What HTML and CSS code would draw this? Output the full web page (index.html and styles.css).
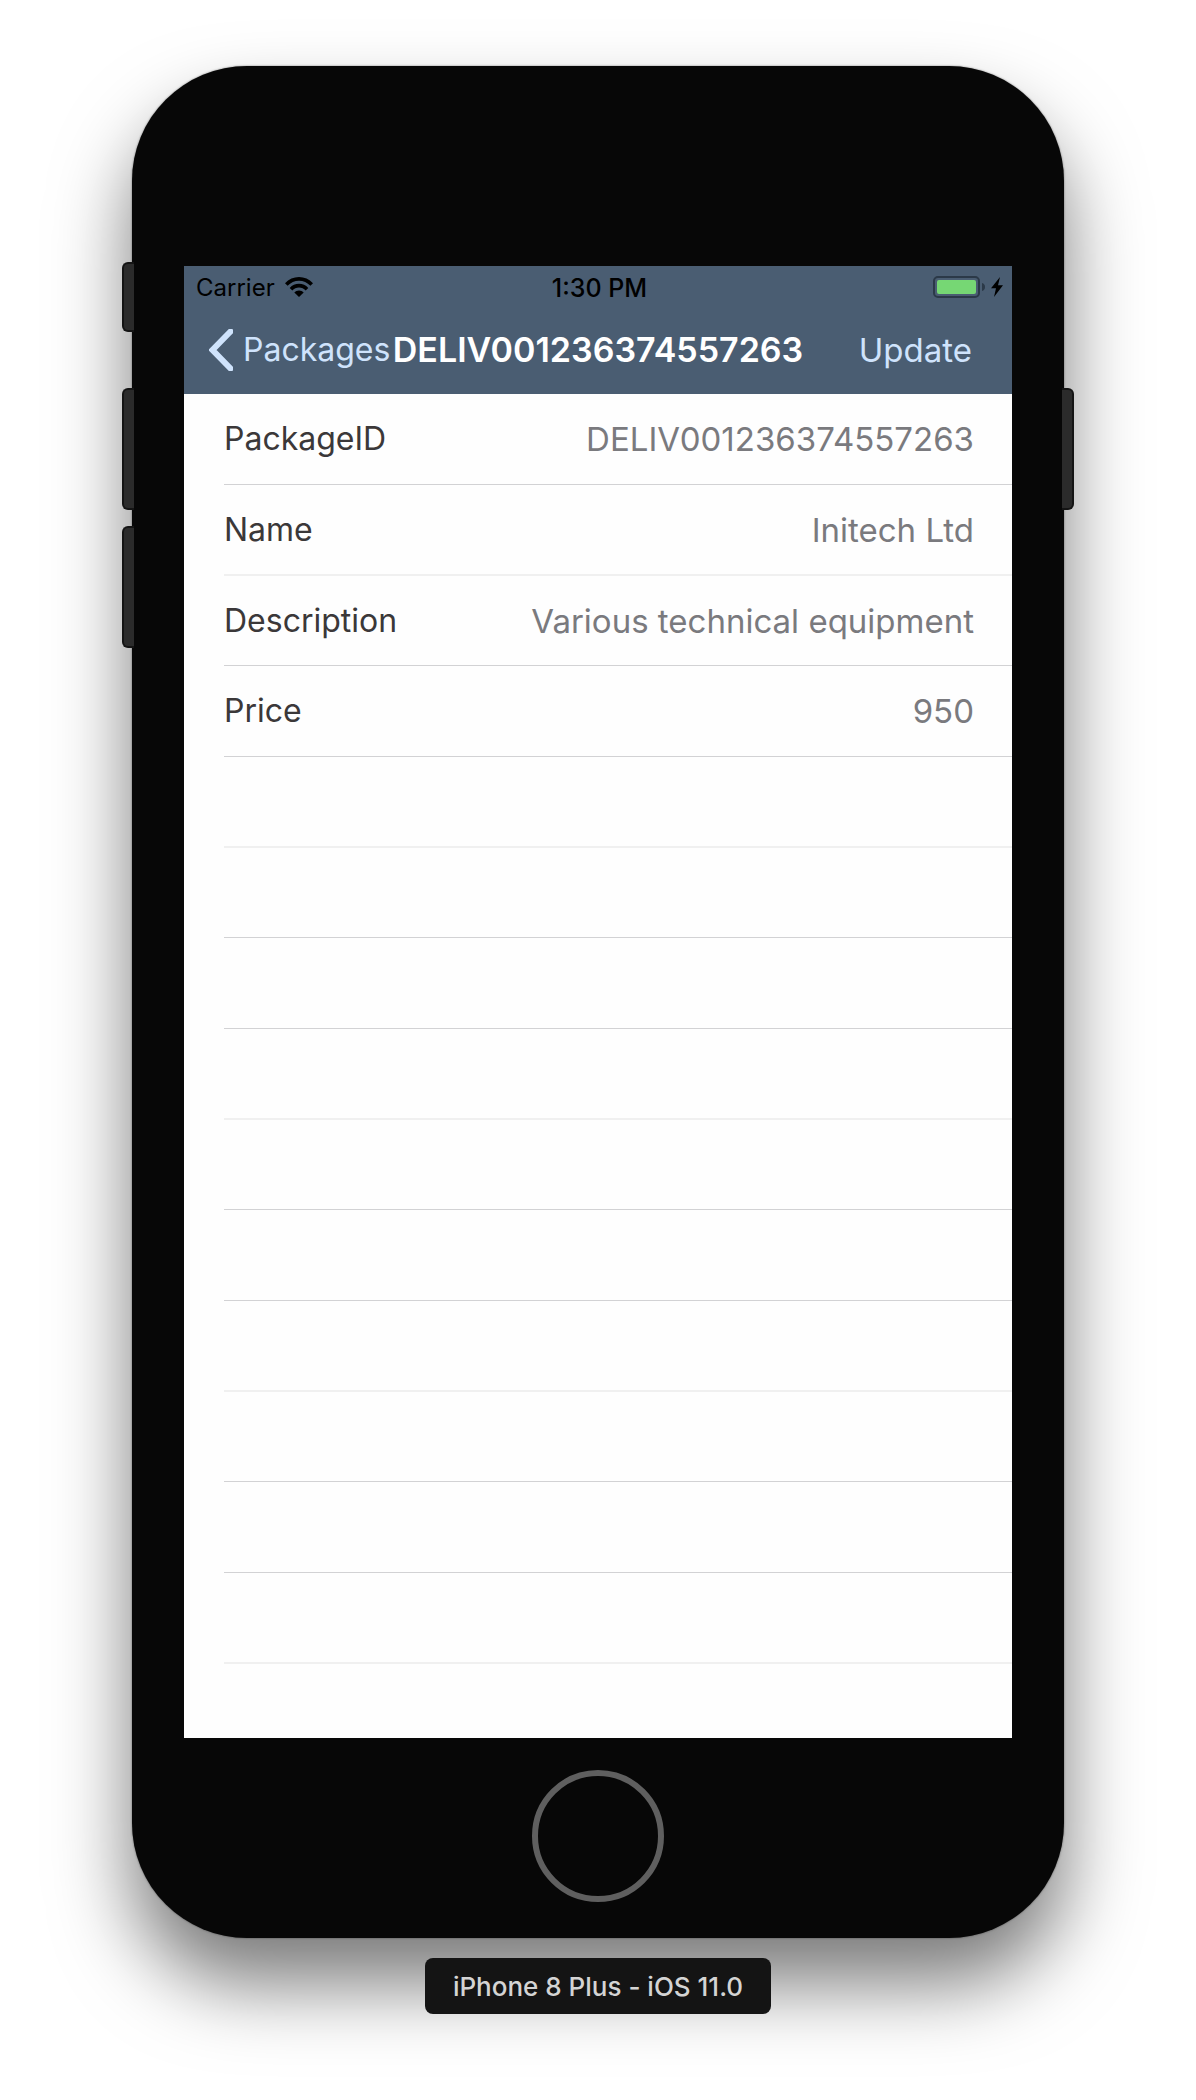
FILE: index.html
```html
<!DOCTYPE html>
<html lang="en">
<head>
<meta charset="utf-8">
<meta name="viewport" content="width=device-width, initial-scale=1">
<title>Package details</title>
<link rel="stylesheet" href="styles.css">
</head>
<body>
<div class="stage">
  <div class="phone">
    <span class="side-key mute"></span>
    <span class="side-key volume-up"></span>
    <span class="side-key volume-down"></span>
    <span class="side-key power"></span>

    <div class="screen">
      <header class="top">
        <div class="status">
          <div class="status-left">
            <span class="carrier">Carrier</span>
            <svg class="wifi" viewBox="0 0 28 20" aria-hidden="true">
              <path d="M0 6.2C3.8 2.200 8.700 0 14 0s10.200 2.200 14 6.200l-2.600 2.600C22.300 5.500 18.300 3.700 14 3.700S5.700 5.500 2.600 8.800z"/>
              <path d="M4.700 10.900C7.200 8.200 10.400 6.800 14 6.800s6.800 1.400 9.300 4.100l-2.600 2.600c-1.800-2-4.100-3.100-6.700-3.100s-4.900 1.100-6.700 3.100z"/>
              <path d="M9.300 15.500c1.200-1.300 2.800-2.100 4.700-2.100s3.500.8 4.700 2.100L14 20z"/>
            </svg>
          </div>
          <span class="time">1:30 PM</span>
          <div class="status-right">
            <svg class="battery" viewBox="0 0 52 22" aria-hidden="true">
              <rect x="1" y="1" width="45" height="20" rx="4" fill="none" stroke="#2b3948" stroke-width="2"/>
              <rect x="4" y="4" width="39" height="14" rx="2" fill="#76d774"/>
              <path d="M49 7c2 .6 3 2 3 4s-1 3.400-3 4z" fill="#2b3948"/>
            </svg>
            <svg class="bolt" viewBox="0 0 12 20" aria-hidden="true">
              <path d="M9 0 0 11.200h5L3 20l9-11.700H7z"/>
            </svg>
          </div>
        </div>
        <nav class="bar">
          <a class="back" href="#packages">
            <svg class="chevron" viewBox="0 0 24 42" aria-hidden="true"><path d="M21.500 2.500 3.500 21l18 18.500"/></svg>
            <span>Packages</span>
          </a>
          <h1 class="title">DELIV001236374557263</h1>
          <button class="update" type="button">Update</button>
        </nav>
      </header>

      <main class="content">
        <dl class="fields">
          <div class="row"><dt>PackageID</dt><dd>DELIV001236374557263</dd></div>
          <div class="row"><dt>Name</dt><dd>Initech Ltd</dd></div>
          <div class="row"><dt>Description</dt><dd>Various technical equipment</dd></div>
          <div class="row"><dt>Price</dt><dd>950</dd></div>
        </dl>
        <div class="blank" aria-hidden="true">
          <div class="row"></div>
          <div class="row"></div>
          <div class="row"></div>
          <div class="row"></div>
          <div class="row"></div>
          <div class="row"></div>
          <div class="row"></div>
          <div class="row"></div>
          <div class="row"></div>
          <div class="row"></div>
        </div>
      </main>
    </div>

    <button class="home" type="button" aria-label="Home"></button>
  </div>
  <p class="device">iPhone 8 Plus - iOS 11.0</p>
</div>
</body>
</html>
```
FILE: styles.css
```css
* {
  box-sizing: border-box;
}

body {
  margin: 0;
  background: #fff;
  font-family: Inter, "Liberation Sans", sans-serif;
  font-size: 33px;
  line-height: 40px;
}

button {
  padding: 0;
  border: 0;
  background: none;
  color: inherit;
  font: inherit;
}

.stage {
  display: flex;
  flex-direction: column;
  align-items: center;
  gap: 20px;
  padding: 66px 132px 86px;
  overflow: hidden;
}

/* Device body */
.phone {
  position: relative;
  display: flex;
  flex-direction: column;
  align-items: center;
  align-self: stretch;
  gap: 32px;
  padding: 200px 52px 36px;
  border-radius: 115px;
  background: #070707;
  box-shadow: 0 0 2px rgba(0, 0, 0, 0.5), 0 46px 78px rgba(0, 0, 0, 0.52);
}

.side-key {
  position: absolute;
  left: -10px;
  width: 12px;
  height: 122px;
  border: 2px solid #141414;
  border-right: 0;
  border-radius: 6px 0 0 6px;
  background: #2b2b2b;
}

.mute {
  top: 196px;
  height: 70px;
}

.volume-up,
.power {
  top: 322px;
}

.volume-down {
  top: 460px;
}

.power {
  right: -10px;
  left: auto;
  border-right: 2px solid #141414;
  border-left: 0;
  border-radius: 0 6px 6px 0;
}

.home {
  width: 132px;
  height: 132px;
  border: 6px solid #5f5f5f;
  border-radius: 50%;
}

/* Screen */
.screen {
  align-self: stretch;
  background: #fefefe;
}

.top {
  background: #4a5d72;
}

.status {
  display: grid;
  grid-template-columns: 1fr auto 1fr;
  align-items: center;
  height: 40px;
  padding: 0 9px 0 12px;
  color: #000;
  font-size: 24px;
}

.status-left,
.status-right {
  display: flex;
  align-items: center;
  gap: 10px;
}

.status-right {
  justify-content: flex-end;
  gap: 6px;
}

.carrier,
.time {
  padding-top: 2px;
}

.time {
  font-size: 25px;
  font-weight: 500;
}

.wifi {
  width: 28px;
  height: 20px;
}

.battery {
  width: 52px;
  height: 22px;
}

.bolt {
  width: 12px;
  height: 20px;
}

.bar {
  display: grid;
  grid-template-columns: minmax(0, 1fr) auto minmax(0, 1fr);
  align-items: center;
  height: 88px;
  padding: 0 25px;
  color: #cfe3fc;
}

.back {
  display: flex;
  align-items: center;
  gap: 10px;
  color: inherit;
  font-size: 32px;
  text-decoration: none;
}

.chevron {
  flex: none;
  width: 24px;
  height: 42px;
  fill: none;
  stroke: currentColor;
  stroke-width: 6;
  stroke-linecap: round;
}

.title {
  margin: 0;
  color: #fff;
  font-size: 34px;
  font-weight: 600;
}

.update {
  justify-self: end;
  margin-right: 15px;
}

/* Details list */
.content {
  padding: 0 0 74px 40px;
}

.fields {
  margin: 0;
}

.row {
  display: flex;
  align-items: center;
  justify-content: space-between;
  height: 91px;
  padding-right: 38px;
  border-bottom: 1px solid #d2d2d4;
}

.fields .row:nth-child(3n + 2),
.blank .row:nth-child(3n + 1) {
  border-bottom: 2px solid #f0f0f0;
}

.fields .row:nth-child(3n),
.blank .row:nth-child(3n + 2) {
  height: 90px;
}

dt {
  color: #3b3839;
  font-size: 32px;
}

dd {
  margin: 0;
  color: #7a7a7e;
}

.device {
  margin: 0;
  padding: 9px 28px 7px;
  border-radius: 8px;
  background: #141414;
  color: #d4d4d4;
  font-size: 26px;
  font-weight: 500;
  z-index: 1;
}
```
